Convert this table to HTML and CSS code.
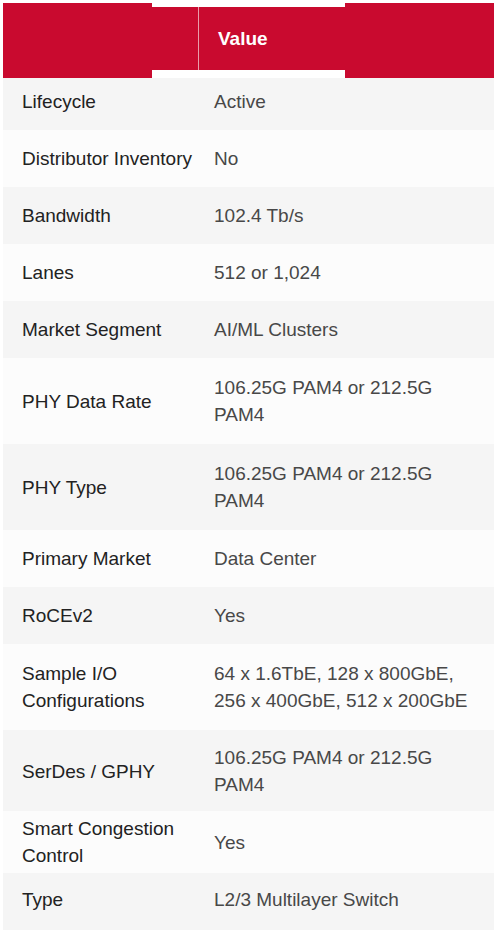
FILE: index.html
```
<!DOCTYPE html>
<html lang="en">
  <head>
    <meta charset="UTF-8" />
    <meta name="viewport" content="width=device-width, initial-scale=1.0" />
    <title>Specifications</title>
    <link rel="stylesheet" href="styles.css">
  </head>
  <body>
    <div class="specs">
      <div class="specs-head">
        <div class="head-cell head-label"></div>
        <div class="head-cell">Value</div>
      </div>

      <div class="row odd row-first"><div class="label">Lifecycle</div><div class="value">Active</div></div>
      <div class="row"><div class="label">Distributor Inventory</div><div class="value">No</div></div>
      <div class="row odd"><div class="label">Bandwidth</div><div class="value">102.4 Tb/s</div></div>
      <div class="row"><div class="label">Lanes</div><div class="value">512 or 1,024</div></div>
      <div class="row odd"><div class="label">Market Segment</div><div class="value">AI/ML Clusters</div></div>
      <div class="row row-tall"><div class="label">PHY Data Rate</div><div class="value">106.25G PAM4 or 212.5G PAM4</div></div>
      <div class="row odd row-tall"><div class="label">PHY Type</div><div class="value">106.25G PAM4 or 212.5G PAM4</div></div>
      <div class="row"><div class="label">Primary Market</div><div class="value">Data Center</div></div>
      <div class="row odd"><div class="label">RoCEv2</div><div class="value">Yes</div></div>
      <div class="row row-tall"><div class="label">Sample I/O Configurations</div><div class="value">64 x 1.6TbE, 128 x 800GbE, 256 x 400GbE, 512 x 200GbE</div></div>
      <div class="row odd row-serdes"><div class="label">SerDes / GPHY</div><div class="value">106.25G PAM4 or 212.5G PAM4</div></div>
      <div class="row row-snug"><div class="label">Smart Congestion Control</div><div class="value">Yes</div></div>
      <div class="row odd row-last"><div class="label">Type</div><div class="value">L2/3 Multilayer Switch</div></div>
    </div>
  </body>
</html>
```

FILE: styles.css
```
:root {
  --red: #c90a2f;
  --label: #222;
  --value: #484848;
}

* {
  box-sizing: border-box;
}
body {
  margin: 0;
  padding: 3px;
  background: #fff;
  font-family: "Liberation Sans", Arial, sans-serif;
  font-size: 19px;
  line-height: 27px;
}

.specs {
  display: flex;
  flex-direction: column;
}

.specs-head {
  display: grid;
  grid-template-columns: 196px 1fr;
  height: 75px;
  /* the white notches above and below the middle of the bar */
  background:
    linear-gradient(#fff, #fff) 149px 0 / 193px 4px no-repeat,
    linear-gradient(#fff, #fff) 149px 67px / 193px 8px no-repeat,
    var(--red);
  color: #fff;
  font-weight: bold;
}
.head-cell {
  display: flex;
  align-items: center;
  padding: 0 0 4px 19px;
}
.head-label {
  margin: 4px 0 8px;
  border-right: 1px solid rgba(255, 255, 255, 0.6);
}

.row {
  display: grid;
  grid-template-columns: 196px 1fr;
  align-items: center;
  padding: 15px 0;
  background: #fcfcfc;
}
.row.odd {
  background: #f5f5f5;
}
.row-first {
  padding: 10px 0 15px;
}
.row-tall {
  padding: 16px 0;
}
.row-serdes {
  padding: 14px 0 13px;
}
.row-snug {
  padding: 4px 0;
}
.row-last {
  padding: 13px 0 17px;
}

.label {
  padding: 0 4px 0 19px;
  color: var(--label);
}
.value {
  padding: 0 20px 0 15px;
  color: var(--value);
}
```
